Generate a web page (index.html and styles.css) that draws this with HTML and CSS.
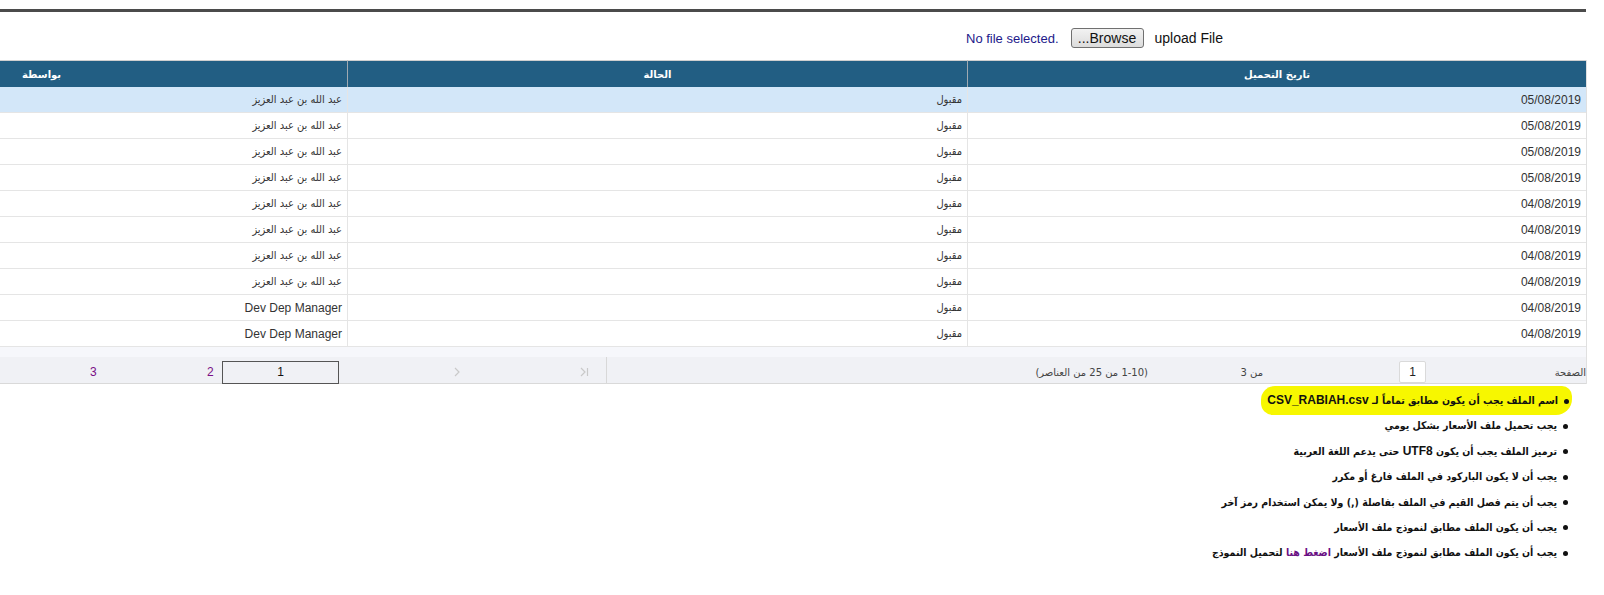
FILE: index.html
```html
<!DOCTYPE html>
<html lang="ar">
<head>
    <meta charset="UTF-8">
    <meta name="viewport" content="width=device-width, initial-scale=1.0">
    <title>upload File</title>
    <link rel="stylesheet" href="styles.css">
</head>
<body>
    <div class="page">
        <div class="upload-bar">
            <span class="file-name">No file selected.</span>
            <button class="browse">...Browse</button>
            <span class="upload-label">upload File</span>
        </div>

        <div class="grid" dir="rtl">
            <table>
                <thead>
                    <tr>
                        <th class="col-date">تاريخ التحميل</th>
                        <th class="col-status">الحالة</th>
                        <th class="col-by">بواسطة</th>
                    </tr>
                </thead>
                <tbody>
                    <tr class="selected"><td>05/08/2019</td><td>مقبول</td><td>عبد الله بن عبد العزيز</td></tr>
                    <tr><td>05/08/2019</td><td>مقبول</td><td>عبد الله بن عبد العزيز</td></tr>
                    <tr><td>05/08/2019</td><td>مقبول</td><td>عبد الله بن عبد العزيز</td></tr>
                    <tr><td>05/08/2019</td><td>مقبول</td><td>عبد الله بن عبد العزيز</td></tr>
                    <tr><td>04/08/2019</td><td>مقبول</td><td>عبد الله بن عبد العزيز</td></tr>
                    <tr><td>04/08/2019</td><td>مقبول</td><td>عبد الله بن عبد العزيز</td></tr>
                    <tr><td>04/08/2019</td><td>مقبول</td><td>عبد الله بن عبد العزيز</td></tr>
                    <tr><td>04/08/2019</td><td>مقبول</td><td>عبد الله بن عبد العزيز</td></tr>
                    <tr><td>04/08/2019</td><td>مقبول</td><td class="latin">Dev Dep Manager</td></tr>
                    <tr><td>04/08/2019</td><td>مقبول</td><td class="latin">Dev Dep Manager</td></tr>
                </tbody>
            </table>

            <div class="pager-gap"></div>
            <div class="pager" dir="ltr">
                <div class="pager-nav">
                    <a class="pg-num pg-3">3</a>
                    <a class="pg-num pg-2">2</a>
                    <span class="pg-current">1</span>
                    <span class="pg-arrow pg-next">
                        <svg width="6" height="10" viewBox="0 0 6 10"><path d="M1 1 L5 5 L1 9" fill="none" stroke="#c9c9c9" stroke-width="1.2"/></svg>
                    </span>
                    <span class="pg-arrow pg-last">
                        <svg width="9" height="10" viewBox="0 0 9 10"><path d="M1 1 L5 5 L1 9" fill="none" stroke="#c9c9c9" stroke-width="1.2"/><path d="M7.5 1 V9" stroke="#c9c9c9" stroke-width="1.2"/></svg>
                    </span>
                </div>
                <div class="pager-info" dir="rtl">
                    <span class="pg-label">الصفحة</span>
                    <span class="pg-input">1</span>
                    <span class="pg-total">من 3</span>
                    <span class="pg-count">(1-10 من 25 من العناصر)</span>
                </div>
            </div>
        </div>

        <ul class="notes" dir="rtl">
            <li><span class="mark"><span class="dot"></span>اسم الملف يجب أن يكون مطابق تماماً لـ <span class="latin">CSV_RABIAH.csv</span></span></li>
            <li><span class="dot"></span>يجب تحميل ملف الأسعار بشكل يومي</li>
            <li><span class="dot"></span>ترميز الملف يجب أن يكون <span class="latin">UTF8</span> حتى يدعم اللغة العربية</li>
            <li><span class="dot"></span>يجب أن لا يكون الباركود في الملف فارغ أو مكرر</li>
            <li><span class="dot"></span>يجب أن يتم فصل القيم في الملف بفاصلة (,) ولا يمكن استخدام رمز آخر</li>
            <li><span class="dot"></span>يجب أن يكون الملف مطابق لنموذج ملف الأسعار</li>
            <li><span class="dot"></span>يجب أن يكون الملف مطابق لنموذج ملف الأسعار <a class="template-link">اضغط هنا</a> لتحميل النموذج</li>
        </ul>
    </div>
</body>
</html>
```

FILE: styles.css
```css
body {
    margin: 0;
    background-color: #fff;
    font-family: "Liberation Sans", "DejaVu Sans", sans-serif;
    color: #333;
}

.page {
    width: 1586px;
    margin-top: 9px;
    border-top: 3px solid #4b4b4b;
}

/* upload row */
.upload-bar {
    display: flex;
    justify-content: flex-end;
    align-items: center;
    height: 44px;
    padding-top: 4px;
    padding-right: 363px;
}

.file-name {
    font-size: 13px;
    color: #22198a;
}

.browse {
    margin: 0 11px 0 12px;
    width: 73px;
    height: 20px;
    padding: 0;
    font-family: "Liberation Sans", sans-serif;
    font-size: 14px;
    color: #111;
    border: 1px solid #707070;
    border-radius: 3px;
    background: linear-gradient(#f2f2f2, #dcdcdc);
}

.upload-label {
    font-size: 14px;
    color: #111;
}

/* grid */
.grid {
    width: 1586px;
    border-right: 1px solid #e0e0e0;
}

table {
    width: 1586px;
    table-layout: fixed;
    border-collapse: separate;
    border-spacing: 0;
}

th {
    height: 26px;
    padding: 0;
    border-top: 1px solid #cfcfcf;
    background-color: #225e83;
    color: #fff;
    font-family: "DejaVu Sans", sans-serif;
    font-size: 10px;
    font-weight: bold;
    text-align: center;
}

th.col-date {
    width: 618px;
    border-left: 1px solid #9fa9b1;
}

th.col-status {
    width: 619px;
    border-left: 1px solid #9fa9b1;
}

th.col-by {
    text-align: left;
    padding-left: 22px;
}

td {
    height: 25px;
    padding: 0 5px;
    border-bottom: 1px solid #e5e5e5;
    text-align: right;
    font-family: "DejaVu Sans Condensed", "DejaVu Sans", sans-serif;
    font-size: 11px;
    color: #333;
    white-space: nowrap;
}

td:nth-child(1) {
    font-family: "Liberation Sans", sans-serif;
    font-size: 12px;
}

td:nth-child(1),
td:nth-child(2) {
    border-left: 1px solid #e5e5e5;
}

td.latin {
    font-family: "Liberation Sans", sans-serif;
    font-size: 12px;
}

tr.selected td {
    background-color: #d3e7f9;
}

/* pager */
.pager-gap {
    height: 10px;
    background-color: #f6f7fb;
}

.pager {
    display: flex;
    height: 22px;
    padding-top: 4px;
    background-color: #f0f1f5;
    border-bottom: 1px solid #d9d9d9;
    font-size: 12px;
}

.pager-nav {
    display: flex;
    align-items: center;
    width: 606px;
    border-right: 1px solid #d8d8d8;
    margin-top: -4px;
    padding-top: 4px;
}

.pg-num {
    color: #7a0f86;
    width: 8px;
}

.pg-3 {
    margin-left: 90px;
}

.pg-2 {
    margin-left: 109px;
}

.pg-current {
    box-sizing: border-box;
    width: 117px;
    height: 23px;
    margin-left: 7px;
    margin-top: 1px;
    border: 1px solid #555;
    color: #111;
    text-align: center;
    line-height: 21px;
}

.pg-arrow {
    display: flex;
}

.pg-next {
    margin-left: 115px;
}

.pg-last {
    margin-left: 120px;
}

.pager-info {
    flex: 1;
    display: flex;
    align-items: center;
    font-family: "DejaVu Sans", sans-serif;
    font-size: 10px;
    color: #444;
    white-space: nowrap;
}

.pg-label {
    width: 30px;
}

.pg-input {
    box-sizing: border-box;
    width: 27px;
    height: 22px;
    margin-right: 130px;
    border: 1px solid #dadada;
    border-radius: 2px;
    background-color: #fff;
    text-align: center;
    line-height: 20px;
    font-family: "Liberation Sans", sans-serif;
    font-size: 12px;
    color: #222;
}

.pg-total {
    width: 20px;
    margin-right: 136px;
}

.pg-count {
    margin-right: 95px;
}

/* notes */
.notes {
    list-style: none;
    margin: 4px 0 0;
    padding: 0 18px 0 0;
    font-family: "DejaVu Sans Condensed", "DejaVu Sans", sans-serif;
    font-size: 10.5px;
    font-weight: bold;
    color: #111;
}

.notes li {
    height: 25.4px;
    line-height: 25.4px;
}

.dot {
    display: inline-block;
    width: 5px;
    height: 5px;
    margin-left: 6px;
    border-radius: 50%;
    background-color: #111;
    vertical-align: middle;
}

.mark {
    display: inline-block;
    line-height: 20px;
    padding: 4px 3px 5px 6px;
    margin: -2px -4px 0 0;
    border-radius: 14px 10px 16px 12px;
    background-color: #f7f700;
}

.latin {
    font-family: "Liberation Sans", sans-serif;
    font-size: 12px;
}

.template-link {
    color: #6b0f84;
}
```
